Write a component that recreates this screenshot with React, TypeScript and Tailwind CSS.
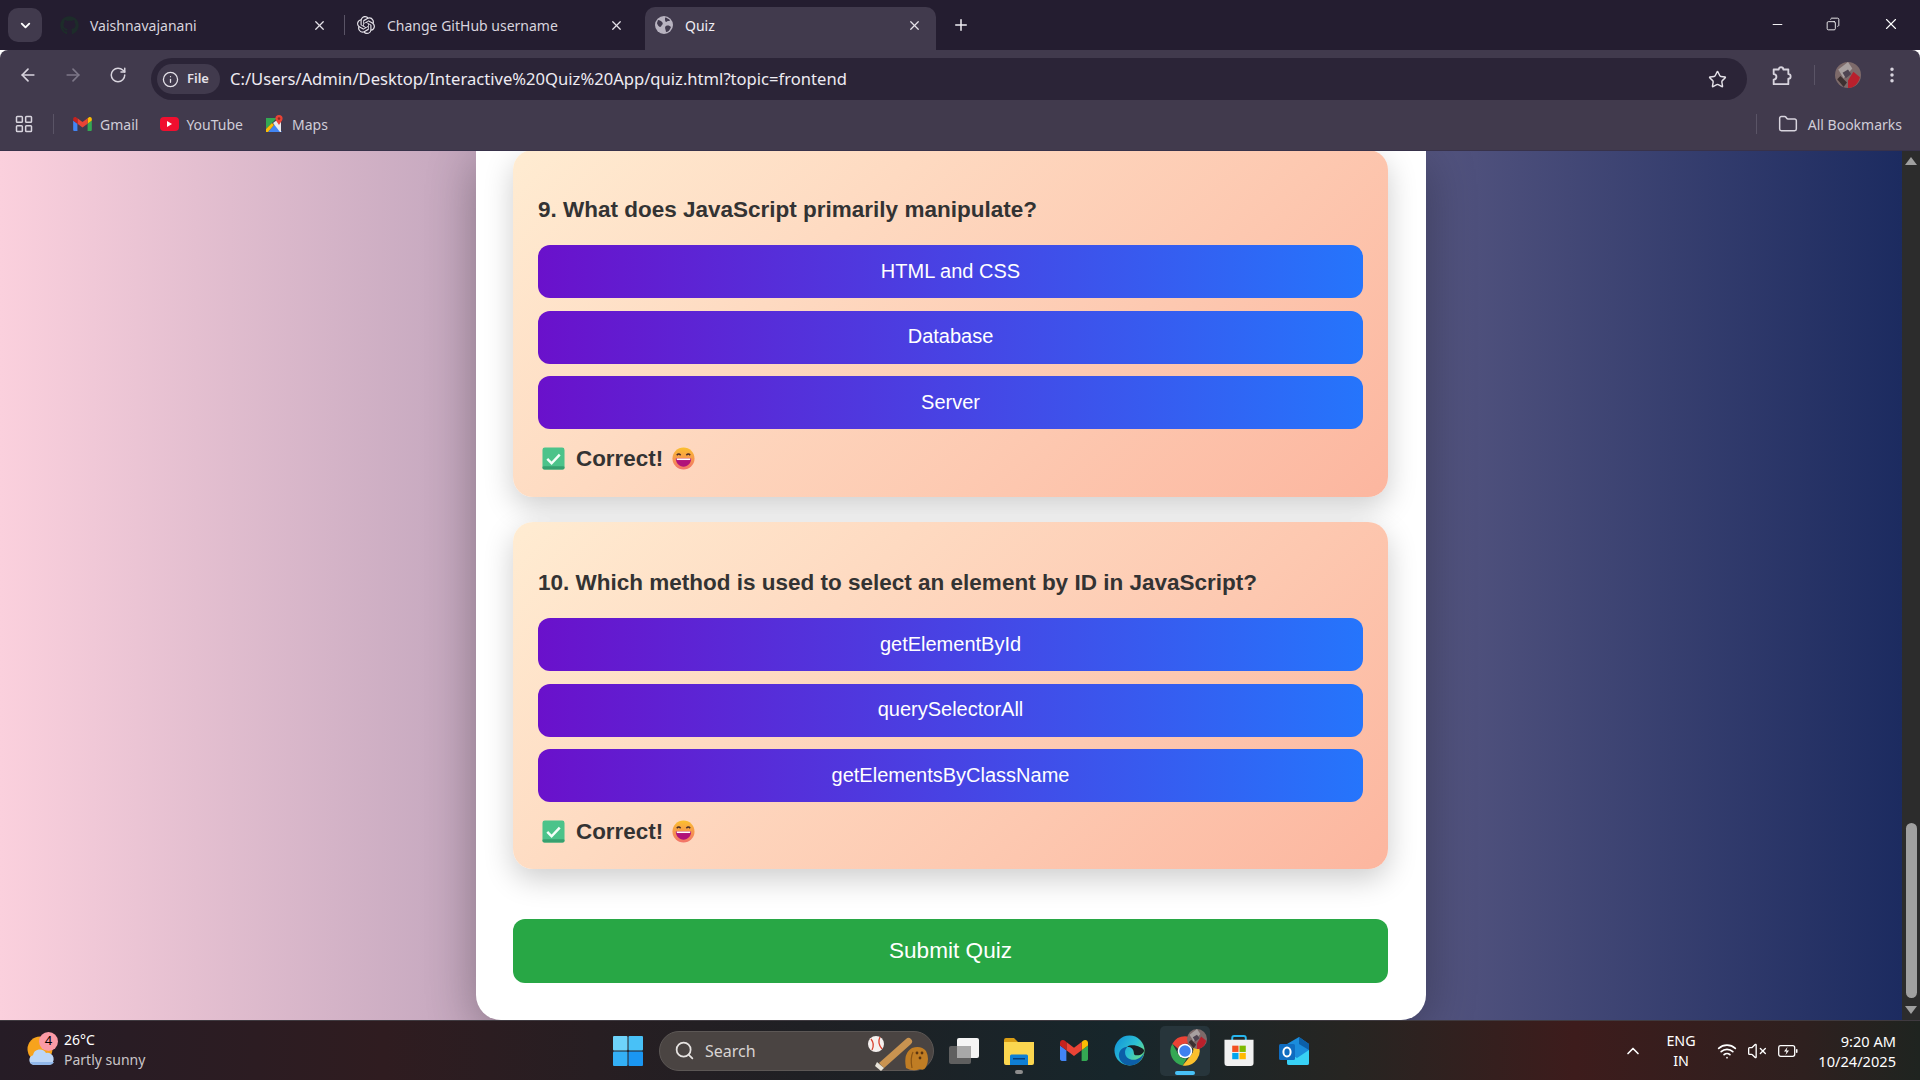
import { ArrowLeft, ArrowRight, RotateCw, Star, EllipsisVertical, X, Plus, Minus, ChevronDown, ChevronUp, Info, Folder, Search, Wifi, VolumeX, Copy, LayoutGrid } from 'lucide-react';
import { FaGithub } from 'react-icons/fa';
import { SiOpenai } from 'react-icons/si';

const questions = [
  { title: '9. What does JavaScript primarily manipulate?', options: ['HTML and CSS', 'Database', 'Server'] },
  { title: '10. Which method is used to select an element by ID in JavaScript?', options: ['getElementById', 'querySelectorAll', 'getElementsByClassName'] },
];

function GmailIcon({ className }: { className: string }) {
  return (
    <svg viewBox="52 42 88 66" className={className}>
      <path fill="#4285f4" d="M58 108h14V74L52 59v43c0 3.32 2.69 6 6 6" />
      <path fill="#34a853" d="M120 108h14c3.32 0 6-2.69 6-6V59l-20 15" />
      <path fill="#fbbc04" d="M120 48v26l20-15v-8c0-7.42-8.47-11.65-14.4-7.2" />
      <path fill="#ea4335" d="M72 74V48l24 18 24-18v26L96 92" />
      <path fill="#c5221f" d="M52 51v8l20 15V48l-5.6-4.2c-5.94-4.45-14.4-.22-14.4 7.2" />
    </svg>
  );
}

function YoutubeIcon() {
  return (
    <div className="w-[19px] h-[14px] rounded-[4px] bg-[#f00f2f] flex items-center justify-center">
      <div className="w-0 h-0 border-y-[3px] border-y-transparent border-l-[5px] border-l-white" />
    </div>
  );
}

function MapsIcon() {
  return (
    <svg viewBox="0 0 18 18" className="w-[18px] h-[18px]">
      <path fill="#34a853" d="M0 3h11L0 14z" />
      <path fill="#4285f4" d="M2 17 9 9l7 8z" />
      <path fill="#fbbc04" d="M0 14 6 8l2 2-6 7H0z" />
      <path fill="#e8eaed" d="M11 5h4v12h-1L7 8z" />
      <path fill="#ea4335" d="M13 0a3.6 3.6 0 0 1 3.6 3.6C16.6 6 14 8 13 10c-1-2-3.6-4-3.6-6.4A3.6 3.6 0 0 1 13 0z" />
      <circle cx="13" cy="3.6" r="1.3" fill="#8e2a20" />
    </svg>
  );
}

function GlobeFilled() {
  return (
    <svg viewBox="0 0 18 18" className="w-[18px] h-[18px]">
      <circle cx="9" cy="9" r="9" fill="#b8b3c0" />
      <path d="M3 4c2 0 3 1 4 2s1 2 0 3-1 2-2 2-3-3-3-4zM11 1.500c1 1 3 1 4 3-1 1-2 0-3 1s-2 0-2-2 0-2 1-2zM11 10c2-1 4 0 5 1-1 3-3 5-5 5 0-2-2-5 0-6z" fill="#413a4d" />
    </svg>
  );
}

function ExtensionIcon() {
  return (
    <svg viewBox="0 0 24 24" className="ml-[23px] w-[22px] h-[22px] flex-none text-[#d8d4de]">
      <path d="M4 6h5.500a2.500 2.500 0 0 1 5 0H20v5a2.500 2.500 0 0 1 0 5v6H4v-5a2.500 2.500 0 0 0 0-6z" fill="none" stroke="currentColor" strokeWidth="2" strokeLinejoin="round" />
    </svg>
  );
}

function BatteryIcon() {
  return (
    <svg viewBox="0 0 20 14" className="ml-[11px] w-[20px] h-[14px] flex-none text-white">
      <rect x="0.700" y="1.700" width="16" height="10.600" rx="2" fill="none" stroke="currentColor" strokeWidth="1.300" />
      <rect x="18" y="5" width="1.500" height="4" rx="0.700" fill="currentColor" />
      <path d="M9.500 3 6 7.500h2.500L7.500 11 11 6.500H8.500z" fill="currentColor" />
    </svg>
  );
}

function CheckEmoji() {
  return (
    <svg viewBox="0 0 24 24" className="w-[23px] h-[23px] flex-none">
      <rect x="0.5" y="0.5" width="23" height="23" rx="2.5" fill="#4cc38a" />
      <rect x="0.5" y="20" width="23" height="3.5" rx="1.5" fill="#36a06f" />
      <path d="M5.5 12.5 10 17l8.5-9" fill="none" stroke="#f4fff9" strokeWidth="2.6" />
    </svg>
  );
}

function SmileEmoji() {
  return (
    <svg viewBox="0 0 24 24" className="w-[23px] h-[23px]">
      <defs>
        <linearGradient id="smile" x1="0" y1="0" x2="0" y2="1">
          <stop offset="0" stopColor="#fbc02d" />
          <stop offset="1" stopColor="#f2726b" />
        </linearGradient>
      </defs>
      <circle cx="12" cy="12" r="11.5" fill="url(#smile)" />
      <path d="M5 8.5q2-2.4 4 0M15 8.5q2-2.4 4 0" fill="none" stroke="#4a2c2a" strokeWidth="1.6" />
      <path d="M4 12h16c0 5-3.6 8.5-8 8.5S4 17 4 12z" fill="#b0127a" />
      <path d="M5 12h14v1.6H5z" fill="#fff" />
    </svg>
  );
}

function ChromeIcon() {
  return (
    <svg viewBox="0 0 48 48" className="w-[32px] h-[32px]">
      <path fill="#ea4335" d="M24 2a22 22 0 0 1 19 11H24a11 11 0 0 0-10.5 7.5L5 13A22 22 0 0 1 24 2z" />
      <path fill="#34a853" d="M5 13l9.5 16.5A11 11 0 0 0 27 34.6L20.5 45.7A22 22 0 0 1 5 13z" />
      <path fill="#fbc02d" d="M43 13A22 22 0 0 1 20.5 45.7L33.5 29.5A11 11 0 0 0 32 13z" />
      <circle cx="24" cy="24" r="11" fill="#fff" />
      <circle cx="24" cy="24" r="8.6" fill="#3f80ee" />
    </svg>
  );
}

function EdgeIcon() {
  return (
    <svg viewBox="0 0 32 32" className="w-[31px] h-[31px]">
      <defs>
        <linearGradient id="edge" x1="0" y1="0" x2="1" y2="0.7">
          <stop offset="0" stopColor="#0f8fd8" />
          <stop offset="0.6" stopColor="#2cc0d4" />
          <stop offset="1" stopColor="#6fe07c" />
        </linearGradient>
      </defs>
      <circle cx="16" cy="16" r="15.5" fill="url(#edge)" />
      <path d="M31 18c-1 8-8 13.5-14 13.5C10 31.500 5 27 5 21c0-5 4-9 9-9-2 2-3 4-2.500 7 .6 4 4 6.500 8.500 6.500 5 0 9-3 11-7.500z" fill="#0c5fa8" />
      <path d="M31 16c0 2.500-3 5-7 5-3 0-3.500-1.200-3.500-2.500 0-3-2-6.500-7-6.500 3-2 9-2 13 .5 2 1.300 4.500 2 4.500 3.500z" fill="#181f24" />
    </svg>
  );
}

function StoreIcon() {
  return (
    <svg viewBox="0 0 30 32" className="w-[30px] h-[31px]">
      <path d="M8 7V3a2 2 0 0 1 2-2h10a2 2 0 0 1 2 2v4" fill="none" stroke="#27b6ee" strokeWidth="2" />
      <path d="M0 5h30v24a3 3 0 0 1-3 3H3a3 3 0 0 1-3-3z" fill="#f1f1f1" />
      <rect x="8" y="11" width="6.500" height="6.500" fill="#f25022" />
      <rect x="15.500" y="11" width="6.500" height="6.500" fill="#7fba00" />
      <rect x="8" y="18.500" width="6.500" height="6.500" fill="#00a4ef" />
      <rect x="15.500" y="18.500" width="6.500" height="6.500" fill="#ffb900" />
    </svg>
  );
}

function OutlookIcon() {
  return (
    <svg viewBox="0 0 30 28" className="w-[30px] h-[28px]">
      <path d="M8 7 20 0l10 7v19a2 2 0 0 1-2 2H10a2 2 0 0 1-2-2z" fill="#1a8cdc" />
      <path d="M8 26V15l10 6 12-8v13a2 2 0 0 1-2 2H10a2 2 0 0 1-2-2z" fill="#38d1f5" />
      <path d="M20 0l10 7v6l-10-6z" fill="#0c5fa8" />
      <rect x="0" y="7" width="16" height="16" rx="1.500" fill="#0f6cc0" />
      <ellipse cx="8" cy="15" rx="3.600" ry="4.600" fill="none" stroke="#fff" strokeWidth="2" />
    </svg>
  );
}

function ExplorerIcon() {
  return (
    <svg viewBox="0 0 30 28" className="w-[30px] h-[28px]">
      <path d="M0 3a2 2 0 0 1 2-2h8l4 4h14a2 2 0 0 1 2 2v3H0z" fill="#d99d14" />
      <path d="M0 5h30v21a2 2 0 0 1-2 2H2a2 2 0 0 1-2-2z" fill="#fbd64f" />
      <path d="M6 19a1.500 1.500 0 0 1 1.500-1.500h15A1.500 1.500 0 0 1 24 19v9H6z" fill="#0f7fd4" />
      <rect x="9" y="21" width="12" height="1.500" fill="#073f7c" />
    </svg>
  );
}

function WeatherIcon() {
  return (
    <svg viewBox="0 0 28 30" className="w-[28px] h-[30px]">
      <circle cx="13" cy="13" r="12.500" fill="#f7a31c" />
      <path d="M7 29a5 5 0 0 1-1-9.800 7 7 0 0 1 13-2.200 5.500 5.500 0 0 1 3 12z" fill="#bcd6f6" />
      <path d="M7 29a5 5 0 0 1-4-3h24a5.500 5.500 0 0 1-5 3z" fill="#92b8ea" />
    </svg>
  );
}

function SearchArt() {
  return (
    <svg viewBox="0 0 66 42" className="w-[66px] h-[42px] flex-none">
      <circle cx="12" cy="14" r="8" fill="#f5f0ee" />
      <path d="M7 9q4 5 1 11M16 7q-3 6 2 12" fill="none" stroke="#d9432f" strokeWidth="1.300" />
      <path d="M15 33 42 9a3 3 0 0 1 5 5L20 38z" fill="#c99350" />
      <path d="M13 32l7 6-3 3-6-5z" fill="#e8e3d8" />
      <path d="M42 38q-3-15 6-20 9-3 14 3 4 8 0 16-2 4-6 2-7 3-14-1z" fill="#c07d24" />
      <path d="M48 38q-2-10 1-16" fill="none" stroke="#8a5414" strokeWidth="1.200" />
      <circle cx="53" cy="23" r="1.400" fill="#5a3410" />
      <circle cx="58" cy="23" r="1.400" fill="#5a3410" />
      <circle cx="56" cy="28" r="1.400" fill="#5a3410" />
    </svg>
  );
}

function Avatar({ className }: { className: string }) {
  return (
    <svg viewBox="0 0 24 24" className={className}>
      <circle cx="12" cy="12" r="12" fill="#7d6a6a" />
      <path d="M12 24c6 0 10-5 11-10l-6-5-5 8z" fill="#b9202c" />
      <path d="M3 7l9-7 4 6-8 9z" fill="#a8a0a0" />
      <path d="M7 10l5-3 3 4-5 4z" fill="#4f4552" />
      <path d="M2 16l6 7 3-4-6-6z" fill="#3c3030" />
    </svg>
  );
}

function TabItem({ icon, label, active, className }: { icon: React.ReactNode; label: string; active?: boolean; className: string }) {
  return (
    <div className={`w-[291px] h-[43px] flex-none flex items-center pl-[10px] pr-[14px] pb-[7px] rounded-t-[10px] ${active ? 'bg-[#413a4d] text-[#f0eef3]' : 'text-[#d8d4de]'} ${className}`}>
      <div className="w-[30px] flex-none flex items-center">{icon}</div>
      <span className="flex-1 text-[14px]">{label}</span>
      <X size={15} strokeWidth={2} className="text-[#e4e1e8]" />
    </div>
  );
}

function QuestionCard({ title, options, first }: { title: string; options: string[]; first?: boolean }) {
  return (
    <div className={`rounded-[20px] bg-[linear-gradient(135deg,#ffecd2,#fcb69f)] px-[25px] pt-[25px] shadow-[0_10px_30px_rgba(0,0,0,0.2)] ${first ? '-mt-px pb-[25px]' : 'pb-[24px]'}`}>
      <h3 className={`mb-[22px] font-bold text-[22.5px] leading-[26px] text-[#333] ${first ? 'mt-[22px]' : 'mt-[23px]'}`}>{title}</h3>
      <div className="flex flex-col gap-[12.5px]">
        {options.map((o) => (
          <div key={o} className="h-[53px] pb-[2px] rounded-[12px] bg-[linear-gradient(90deg,#6a11cb,#2575fc)] flex items-center justify-center text-white text-[20px]">
            {o}
          </div>
        ))}
      </div>
      <div className="mt-[15px] h-[28px] flex items-center pl-[4px] font-bold text-[22.4px] text-[#333]">
        <CheckEmoji />
        <span className="ml-[11px] pt-px">Correct!</span>
        <span className="ml-[9px]"><SmileEmoji /></span>
      </div>
    </div>
  );
}

export default function App() {
  return (
    <div className="w-[1920px] h-[1080px] flex flex-col overflow-hidden font-['Liberation_Sans',sans-serif]">
      {/* tab strip */}
      <div className="h-[50px] flex-none bg-[#241d30] flex items-end font-['Noto_Sans',sans-serif]">
        <div className="self-start mt-[8px] ml-[8px] w-[34px] h-[34px] flex-none rounded-[10px] bg-[#413a4d] flex items-center justify-center">
          <ChevronDown size={15} strokeWidth={3} className="text-white" />
        </div>
        <TabItem className="ml-[8px]" icon={<FaGithub size={19} className="text-[#1d2c2a]" />} label="Vaishnavajanani" />
        <div className="ml-[3px] w-px h-[20px] flex-none bg-[#5a5466] mb-[15px]" />
        <TabItem className="ml-[2px]" icon={<SiOpenai size={18} className="text-[#e4e1e8]" />} label="Change GitHub username" />
        <TabItem className="ml-[7px]" active icon={<GlobeFilled />} label="Quiz" />
        <Plus size={18} strokeWidth={2} className="ml-[16px] mb-[16px] text-[#f0eef3]" />
        <div className="ml-auto h-[50px] flex items-center text-white pb-[2px]">
          <Minus size={15} strokeWidth={1.5} className="mr-[41px]" />
          <Copy size={14} strokeWidth={1.5} className="mr-[42px] -scale-x-100" />
          <X size={18} strokeWidth={1.5} className="mr-[20px]" />
        </div>
      </div>

      {/* toolbar */}
      <div className="h-[50px] flex-none bg-[#413a4d] rounded-t-[8px] flex items-center font-['Noto_Sans',sans-serif]">
        <ArrowLeft size={20} strokeWidth={2} className="ml-[18px] text-[#d8d4de]" />
        <ArrowRight size={20} strokeWidth={2} className="ml-[25px] text-[#7d7788]" />
        <RotateCw size={18} strokeWidth={2} className="ml-[26px] text-[#d8d4de]" />
        <div className="ml-[24px] w-[1596px] h-[42px] mt-[8px] rounded-full bg-[#2b2437] flex items-center">
          <div className="ml-[6px] w-[63px] h-[30px] rounded-full bg-[#413a4d] flex items-center pl-[5px]">
            <Info size={17} strokeWidth={1.8} className="text-[#e4e1e8]" />
            <span className="ml-[8px] text-[13px] font-semibold text-[#e4e1e8]">File</span>
          </div>
          <span className="ml-[10px] pt-[1px] text-[16.6px] text-[#eeebf2]">C:/Users/Admin/Desktop/Interactive%20Quiz%20App/quiz.html?topic=frontend</span>
          <Star size={19} strokeWidth={1.8} className="ml-auto mr-[20px] text-[#e4e1e8]" />
        </div>
        <ExtensionIcon />
        <div className="ml-[22px] w-px h-[20px] bg-[#5a5466]" />
        <Avatar className="ml-[20px] w-[26px] h-[26px]" />
        <EllipsisVertical size={20} strokeWidth={2.2} className="ml-[21px] text-[#d8d4de]" />
      </div>

      {/* bookmarks */}
      <div className="h-[51px] flex-none bg-[#413a4d] flex items-center pb-[2px] text-[14px] text-[#d0cdd8] border-b border-[#38324a] font-['Noto_Sans',sans-serif]">
        <LayoutGrid size={20} strokeWidth={1.8} className="ml-[14px] text-[#d8d4de]" />
        <div className="ml-[19px] w-px h-[20px] bg-[#5a5466]" />
        <GmailIcon className="ml-[19px] w-[19px] h-[14px]" />
        <span className="ml-[8px]">Gmail</span>
        <div className="ml-[22px]"><YoutubeIcon /></div>
        <span className="ml-[7px]">YouTube</span>
        <div className="ml-[23px]"><MapsIcon /></div>
        <span className="ml-[8px]">Maps</span>
        <div className="ml-auto w-px h-[20px] bg-[#5a5466]" />
        <Folder size={20} strokeWidth={1.8} className="ml-[21px] text-[#d8d4de]" />
        <span className="ml-[10px] mr-[18px]">All Bookmarks</span>
      </div>

      {/* page */}
      <div className="flex-1 min-h-0 flex">
        <div className="flex-1 min-w-0 flex justify-center overflow-hidden bg-[linear-gradient(90deg,#fbd0dd,#1c2b60)]">
          <div className="w-[950px] bg-white rounded-b-[25px] pl-[37px] pr-[38px] flex flex-col shadow-[0_10px_50px_rgba(0,0,0,0.3)]">
            <div className="flex flex-col gap-[25px]">
              {questions.map((q, i) => (
                <QuestionCard key={q.title} title={q.title} options={q.options} first={i === 0} />
              ))}
            </div>
            <div className="mt-[50px] h-[64px] rounded-[12px] bg-[#28a745] flex items-center justify-center text-white text-[22.6px]">
              Submit Quiz
            </div>
          </div>
        </div>
        <div className="w-[18px] flex-none bg-[#2c2c2c] flex flex-col items-center pt-[6px] pb-[6px]">
          <div className="w-0 h-0 border-x-[6px] border-x-transparent border-b-[8px] border-b-[#a0a0a0]" />
          <div className="flex-1 w-full flex flex-col justify-end items-center pb-[8px]">
            <div className="w-[11px] h-[175px] rounded-full bg-[#a0a0a0]" />
          </div>
          <div className="w-0 h-0 border-x-[6px] border-x-transparent border-t-[8px] border-t-[#a0a0a0]" />
        </div>
      </div>

      {/* taskbar */}
      <div className="h-[60px] flex-none flex items-center border-t border-[#3f3a40] bg-[linear-gradient(90deg,#261c26_0%,#2f1c20_20%,#1f2024_42%,#17262b_58%,#262522_70%,#3d1c1c_82%,#2e201f_94%,#1f2420_100%)] font-['Noto_Sans',sans-serif]">
        <div className="relative ml-[27px] w-[28px] flex-none">
          <WeatherIcon />
          <div className="absolute -top-[4px] left-[12px] w-[19px] h-[19px] rounded-full bg-[#fb9aa6] flex items-center justify-center text-[13px] text-black">4</div>
        </div>
        <div className="ml-[9px] w-[120px] pb-[2px] flex-none flex flex-col text-[14px] leading-[20px] whitespace-nowrap">
          <span className="text-white">26°C</span>
          <span className="text-[#c9c5c8]">Partly sunny</span>
        </div>
        <svg viewBox="0 0 30 30" className="ml-[429px] w-[30px] h-[30px] flex-none">
          <rect x="0" y="0" width="14.500" height="14.500" rx="1" fill="#6ed3fa" />
          <rect x="15.500" y="0" width="14.500" height="14.500" rx="1" fill="#48c1f7" />
          <rect x="0" y="15.500" width="14.500" height="14.500" rx="1" fill="#34b0f6" />
          <rect x="15.500" y="15.500" width="14.500" height="14.500" rx="1" fill="#1a96f2" />
        </svg>
        <div className="ml-[16px] w-[275px] h-[40px] flex-none rounded-full bg-[#4a4442] border border-[#5c5755] flex items-center">
          <Search size={21} strokeWidth={2} className="ml-[14px] text-[#e6e3e1]" />
          <span className="ml-[10px] text-[16px] text-[#d8d4d2]">Search</span>
          <div className="ml-auto mr-[3px]"><SearchArt /></div>
        </div>
        <svg viewBox="0 0 30 26" className="ml-[15px] w-[30px] h-[26px] flex-none">
          <rect x="0" y="8" width="22" height="18" rx="2" fill="#5f5f5f" />
          <rect x="8" y="0" width="22" height="20" rx="2" fill="#f4f4f4" />
          <rect x="8" y="8" width="14" height="12" fill="#a8a8a8" />
        </svg>
        <div className="ml-[25px] relative flex-none">
          <ExplorerIcon />
          <div className="absolute -bottom-[9px] left-[11px] w-[8px] h-[4px] rounded-full bg-[#8d8d8d]" />
        </div>
        <GmailIcon className="ml-[26px] w-[28px] h-[21px] flex-none" />
        <div className="ml-[26px] flex-none"><EdgeIcon /></div>
        <div className="relative ml-[15px] w-[50px] h-[50px] flex-none rounded-[5px] bg-[#27353b] flex items-center justify-center">
          <ChromeIcon />
          <Avatar className="absolute top-[3px] right-[3px] w-[20px] h-[20px]" />
          <div className="absolute bottom-[1px] left-[15px] w-[20px] h-[4px] rounded-full bg-[#48c1f7]" />
        </div>
        <div className="ml-[14px] flex-none"><StoreIcon /></div>
        <div className="ml-[25px] flex-none"><OutlookIcon /></div>
        <ChevronUp size={20} strokeWidth={2} className="ml-auto text-white" />
        <div className="ml-[16px] w-[44px] flex-none flex flex-col items-center text-[14.3px] leading-[20px] text-white">
          <span>ENG</span>
          <span>IN</span>
        </div>
        <Wifi size={20} strokeWidth={2} className="ml-[14px] text-white" />
        <VolumeX size={20} strokeWidth={1.6} className="ml-[10px] text-white" />
        <BatteryIcon />
        <div className="ml-[8px] mr-[24px] w-[90px] flex-none flex flex-col items-end text-[14.6px] leading-[20px] text-white">
          <span>9:20 AM</span>
          <span>10/24/2025</span>
        </div>
      </div>
    </div>
  );
}
